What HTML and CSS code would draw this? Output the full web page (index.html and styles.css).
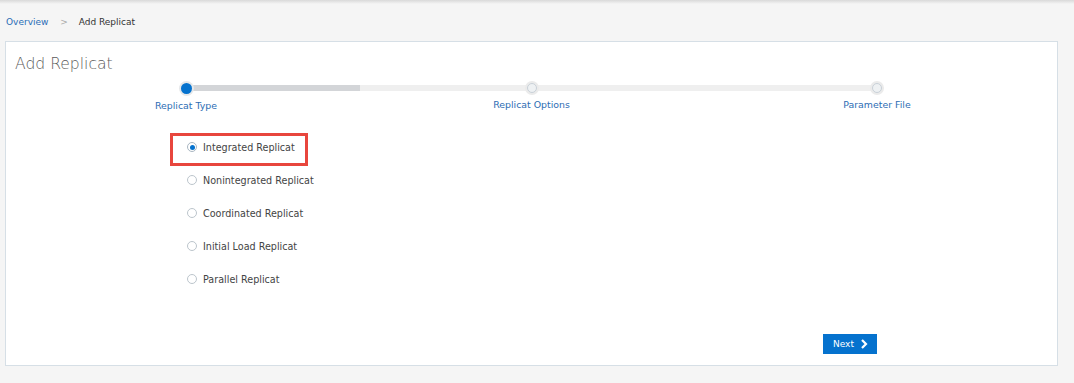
FILE: index.html
```html
<!DOCTYPE html>
<html lang="en">
<head>
  <meta charset="UTF-8" />
  <title>Add Replicat</title>
  <link rel="stylesheet" href="styles.css">
</head>
<body>
<div class="topbar"></div>

<nav class="crumbs">
  <a href="#">Overview</a>
  <span class="sep">&gt;</span>
  <span class="current">Add Replicat</span>
</nav>

<div class="panel">
  <h1>Add Replicat</h1>

  <div class="train">
    <div class="track"><div class="done"></div></div>
    <div class="step active"><span class="dot"></span><span class="label">Replicat Type</span></div>
    <div class="step"><span class="dot"></span><span class="label">Replicat Options</span></div>
    <div class="step"><span class="dot"></span><span class="label">Parameter File</span></div>
  </div>

  <ul class="choices">
    <li class="choice checked"><span class="radio"></span>Integrated Replicat<span class="mark"></span></li>
    <li class="choice"><span class="radio"></span>Nonintegrated Replicat</li>
    <li class="choice"><span class="radio"></span>Coordinated Replicat</li>
    <li class="choice"><span class="radio"></span>Initial Load Replicat</li>
    <li class="choice"><span class="radio"></span>Parallel Replicat</li>
  </ul>

  <div class="footer">
    <button class="next">Next
      <svg width="8" height="10" viewBox="0 0 8 10"><polyline points="2,1 6,5 2,9" fill="none" stroke="#fff" stroke-width="2.2"/></svg>
    </button>
  </div>
</div>
</body>
</html>
```

FILE: styles.css
```css
body {
  font-family: 'DejaVu Sans', sans-serif;
  background: #f5f5f5;
  margin: 0;
  padding: 0;
}
.topbar {
  height: 4px;
  background: linear-gradient(#d9d9d9, #f5f5f5);
}
.crumbs {
  font-size: 9px;
  line-height: 14px;
  padding: 11px 0 0 6px;
  height: 14px;
}
.crumbs a {
  color: #2a6db5;
  text-decoration: none;
}
.crumbs .sep {
  color: #aaa;
  margin: 0 8px 0 9px;
}
.crumbs .current {
  color: #333;
}
.panel {
  margin: 12px 0 0 5px;
  width: 1051px;
  background: #fff;
  border: 1px solid #d6dfe6;
  padding-bottom: 11px;
}
h1 {
  font-family: 'DejaVu Sans ExtraLight', 'DejaVu Sans', sans-serif;
  font-weight: 200;
  font-size: 15.6px;
  line-height: 20px;
  color: #5a5a5a;
  margin: 12px 0 0 9px;
}
.train {
  position: relative;
  display: flex;
  justify-content: space-between;
  width: 811px;
  margin: 8px 0 0 120px;
}
.track {
  position: absolute;
  left: 60px;
  right: 60px;
  top: 3px;
  height: 6px;
  background: #efefef;
}
.track .done {
  width: 174px;
  height: 100%;
  background: #d3d5d8;
}
.step {
  position: relative;
  width: 120px;
  display: flex;
  flex-direction: column;
  align-items: center;
}
.dot {
  width: 10px;
  height: 10px;
  margin-top: 1px;
  box-sizing: border-box;
  border-radius: 50%;
  background: #eef1f3;
  border: 1px solid #c9d1d8;
  box-shadow: 0 0 0 2px #ebebeb;
}
.step.active .dot {
  width: 11px;
  height: 11px;
  margin-top: 0.5px;
  background: #0572ce;
  border: none;
  box-shadow: 0 0 0 2px #e6e8ea;
}
.label {
  font-size: 9.4px;
  line-height: 12px;
  margin-top: 6px;
  color: #2d6db4;
  white-space: nowrap;
}
.choices {
  list-style: none;
  margin: 19px 0 0 181px;
  padding: 0;
}
.choice {
  position: relative;
  display: flex;
  align-items: center;
  height: 33px;
  font-size: 9.6px;
  color: #444;
}
.radio {
  width: 10px;
  height: 10px;
  box-sizing: border-box;
  border-radius: 50%;
  border: 1px solid #bcc5cc;
  background: #fff;
  margin-right: 6px;
  position: relative;
}
.choice.checked .radio {
  border-color: #a9b6c1;
}
.choice.checked .radio::after {
  content: "";
  position: absolute;
  left: 1.5px;
  top: 1.5px;
  width: 5px;
  height: 5px;
  border-radius: 50%;
  background: #0572ce;
}
.mark {
  position: absolute;
  left: -17px;
  top: 2px;
  width: 138px;
  height: 33px;
  box-sizing: border-box;
  border: 3px solid #e8463d;
}
.footer {
  display: flex;
  justify-content: flex-end;
  padding-right: 180px;
  margin-top: 38px;
}
.next {
  display: flex;
  align-items: center;
  gap: 6px;
  height: 20px;
  width: 54px;
  padding: 0 0 0 10px;
  border: none;
  background: #0572ce;
  color: #fff;
  font-family: 'DejaVu Sans', sans-serif;
  font-size: 9px;
  cursor: pointer;
}
```
